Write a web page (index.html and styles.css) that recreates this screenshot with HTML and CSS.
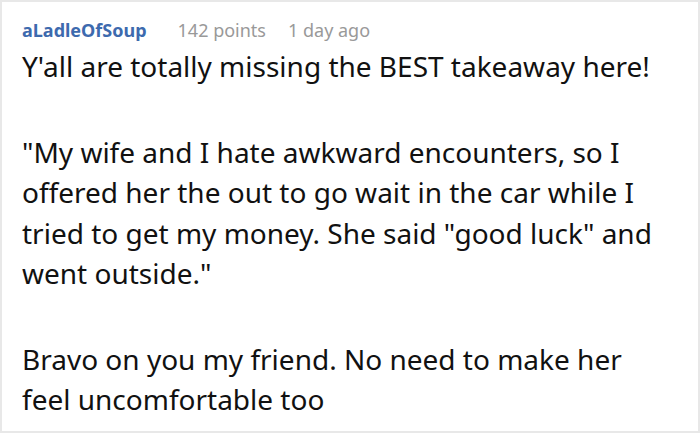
FILE: index.html
```html
<!DOCTYPE html>
<html>
<head>
<meta charset="utf-8">
<link rel="stylesheet" href="styles.css">
</head>
<body>
<div class="comment">
  <div class="meta">
    <span class="user">aLadleOfSoup</span>
    <span class="info">142 points</span>
    <span class="info">1 day ago</span>
  </div>
  <div class="body">
    <p>Y'all are totally missing the BEST takeaway here!</p>
    <p>"My wife and I hate awkward encounters, so I offered her the out to go wait in the car while I tried to get my money. She said "good luck" and went outside."</p>
    <p>Bravo on you my friend. No need to make her feel uncomfortable too</p>
  </div>
</div>
</body>
</html>
```

FILE: styles.css
```css
html, body {
  margin: 0;
  padding: 0;
  background: #fff;
}
.comment {
  box-sizing: border-box;
  width: 700px;
  height: 433px;
  border: 2px solid #e8e8e8;
  padding: 16px 24px 0 20px;
  font-family: "Noto Sans", sans-serif;
  color: #111;
}
.meta {
  display: flex;
  font-size: 18px;
  line-height: 24px;
}
.user {
  color: #3d6aae;
  font-weight: bold;
  margin-right: 31px;
}
.info {
  color: #999;
  margin-right: 22px;
}
.body {
  margin-top: 4px;
  font-size: 28px;
  line-height: 40.5px;
}
.body p {
  margin: 0 0 45px 0;
}
```
